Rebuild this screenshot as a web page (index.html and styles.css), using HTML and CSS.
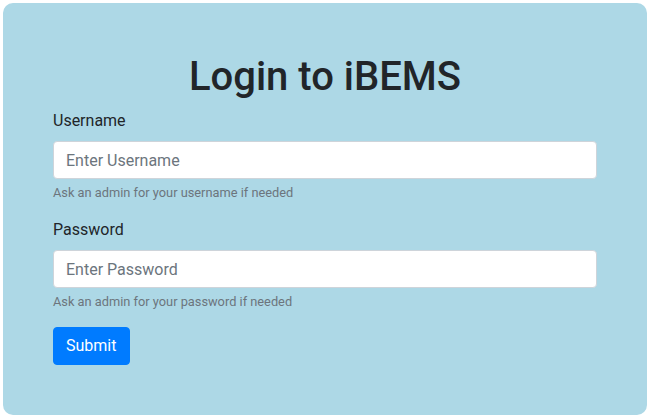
FILE: index.html
```html
<!DOCTYPE html>
<html lang="en">
<head>
<meta charset="utf-8">
<title>Login to iBEMS</title>
<link rel="stylesheet" href="styles.css">
</head>
<body>
<div class="card">
  <h1 class="title">Login to iBEMS</h1>
  <form class="form">
    <div class="form-group">
      <label class="label" for="username">Username</label>
      <input class="input" id="username" type="text" placeholder="Enter Username">
      <small class="help">Ask an admin for your username if needed</small>
    </div>
    <div class="form-group">
      <label class="label" for="password">Password</label>
      <input class="input" id="password" type="password" placeholder="Enter Password">
      <small class="help">Ask an admin for your password if needed</small>
    </div>
    <button class="btn" type="submit">Submit</button>
  </form>
</div>
</body>
</html>
```
FILE: styles.css
```css
* { box-sizing: border-box; }
html, body { margin: 0; padding: 0; background: #fff; }
body {
  font-family: Roboto, "Liberation Sans", sans-serif;
  font-size: 16px;
  line-height: 1.5;
  color: #212529;
  padding: 3px 4px 3px 3px;
}
.card {
  background: #add8e6;
  border-radius: 10px;
  padding: 50px 50px 50px 50px;
}
.title {
  margin: 0 0 8px 0;
  font-size: 40px;
  font-weight: 500;
  line-height: 1.2;
  text-align: center;
  color: #212529;
}
.form { margin: 0; }
.form-group { margin-bottom: 16px; }
.label {
  display: inline-block;
  margin-bottom: 8px;
}
.input {
  display: block;
  width: 100%;
  height: 38px;
  padding: 6px 12px;
  font-family: inherit;
  font-size: 16px;
  line-height: 1.5;
  color: #495057;
  background: #fff;
  border: 1px solid #ced4da;
  border-radius: 4px;
  outline: none;
}
.input::placeholder { color: #6c757d; opacity: 1; }
.help {
  display: block;
  margin-top: 4px;
  font-size: 12.8px;
  color: #6c757d;
}
.btn {
  display: inline-block;
  font-family: inherit;
  font-size: 16px;
  line-height: 1.5;
  padding: 6px 13px 6px 12px;
  color: #fff;
  background: #007bff;
  border: 1px solid #007bff;
  border-radius: 4px;
  cursor: pointer;
}
```
